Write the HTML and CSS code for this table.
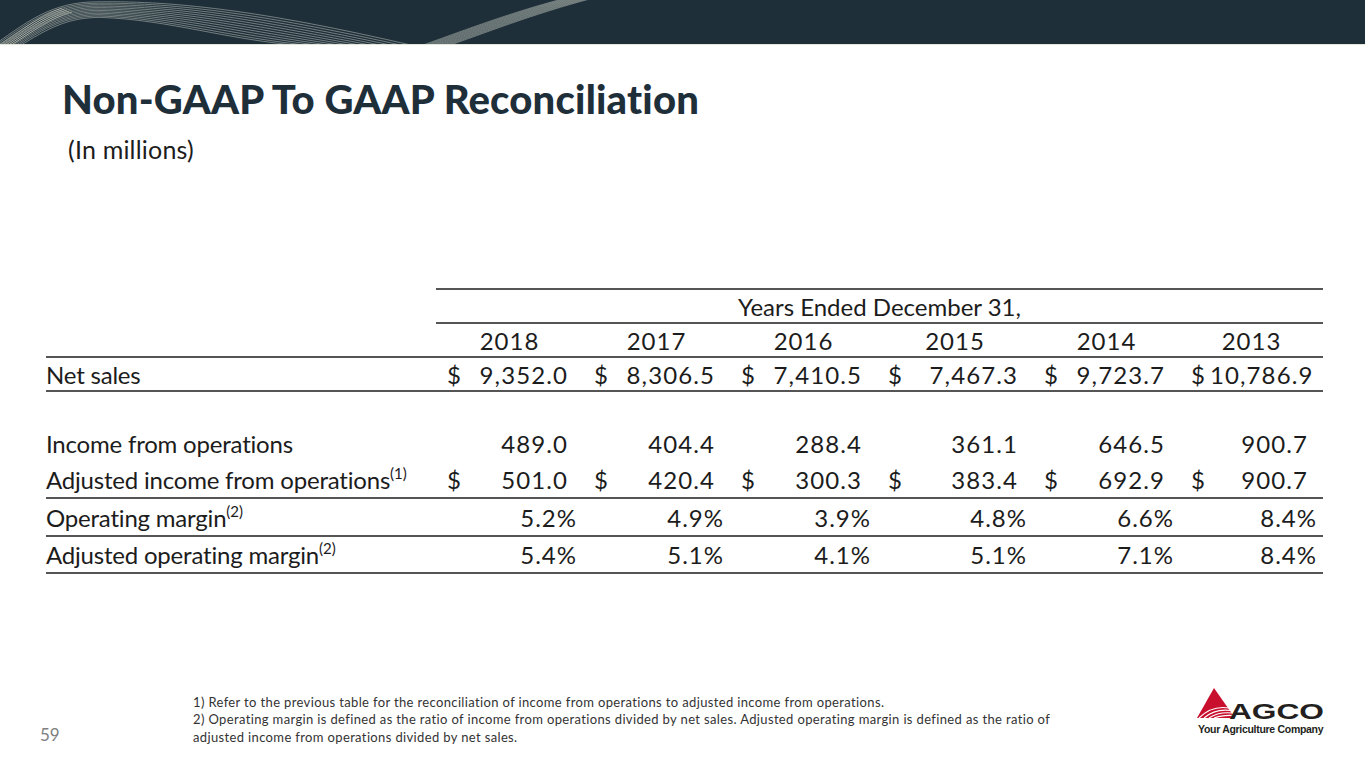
FILE: index.html
```html
<!DOCTYPE html>
<html lang="en">
<head>
<meta charset="utf-8">
<title>Non-GAAP To GAAP Reconciliation</title>
<link rel="stylesheet" href="styles.css">
</head>
<body>
<div class="slide">
  <header class="topbar">
    <svg class="waves" width="700" height="44" viewBox="0 0 700 44" aria-hidden="true">
      <g class="w-main">
        <path d="M -8,46 C 20,28 45,4 90,2 C 170,0 260,10 415,46"/>
        <path d="M -5.5,46 C 22.5,28 47,5.2 91,3.4 C 170,1.8 257,12.8 405,46"/>
        <path d="M -3,46 C 25,28 49,6.4 92,4.8 C 170,3.6 254,15.6 395,46"/>
        <path d="M -0.5,46 C 27.5,28 51,7.6 93,6.2 C 170,5.4 251,18.4 385,46"/>
        <path d="M 2,46 C 30,28 53,8.8 94,7.6 C 170,7.2 248,21.2 375,46"/>
        <path d="M 4.5,46 C 32.5,28 55,10 95,9 C 170,9 245,24 365,46"/>
        <path d="M 7,46 C 35,28 57,11.2 96,10.4 C 170,10.8 242,26.8 355,46"/>
        <path d="M 9.5,46 C 37.5,28 59,12.4 97,11.8 C 170,12.6 239,29.6 345,46"/>
        <path d="M 12,46 C 40,28 61,13.6 98,13.2 C 170,14.4 236,32.4 335,46"/>
        <path d="M 14.5,46 C 42.5,28 63,14.8 99,14.6 C 170,16.2 233,35.2 325,46"/>
        <path d="M 17,46 C 45,28 65,16 100,16 C 170,18 230,38 315,46"/>
        <path d="M 19.5,46 C 47.5,29 67,17.2 101,17.4 C 170,19.8 227,40 305,46"/>
      </g>
      <g class="w-hi">
        <path d="M -2,46 C 20,32 38,16 62,8"/>
        <path d="M 1,46 C 23,32 41,16.5 64.5,9"/>
        <path d="M 4,46 C 26,32 44,17 67,10"/>
        <path d="M 7,46 C 29,32 47,17.5 69.5,11"/>
        <path d="M 10,46 C 32,32 50,18 72,12"/>
      </g>
      <g class="w-soft">
        <path d="M 420,46 C 455,34 505,14 566,-2"/>
        <path d="M 422.5,46 C 457.5,34 507.5,14 568.5,-2"/>
        <path d="M 425,46 C 460,34 510,14 571,-2"/>
        <path d="M 427.5,46 C 462.5,34 512.5,14 573.5,-2"/>
        <path d="M 430,46 C 465,34 515,14 576,-2"/>
        <path d="M 432.5,46 C 467.5,34 517.5,14 578.5,-2"/>
        <path d="M 435,46 C 470,34 520,14 581,-2"/>
        <path d="M 437.5,46 C 472.5,34 522.5,14 583.5,-2"/>
        <path d="M 440,46 C 475,34 525,14 586,-2"/>
        <path d="M 442.5,46 C 477.5,34 527.5,14 588.5,-2"/>
        <path d="M 445,46 C 480,34 530,14 591,-2"/>
        <path d="M 447.5,46 C 482.5,34 532.5,14 593.5,-2"/>
      </g>
    </svg>
  </header>

  <h1 class="title">Non-GAAP To GAAP Reconciliation</h1>
  <div class="subtitle">(In millions)</div>

  <table class="recon">
    <colgroup>
      <col class="c-label">
      <col class="c-cur"><col class="c-g1">
      <col class="c-cur"><col class="c-g2">
      <col class="c-cur"><col class="c-g3">
      <col class="c-cur"><col class="c-g4">
      <col class="c-cur"><col class="c-g5">
      <col class="c-cur"><col class="c-g6">
    </colgroup>
    <tbody>
      <tr class="r-head1">
        <td class="blank"></td>
        <td colspan="12" class="center lined-top lined-bottom">Years Ended December 31,</td>
      </tr>
      <tr class="r-head2">
        <td class="lined-bottom"></td>
        <td colspan="2" class="center year lined-bottom">2018</td>
        <td colspan="2" class="center year lined-bottom">2017</td>
        <td colspan="2" class="center year lined-bottom">2016</td>
        <td colspan="2" class="center year lined-bottom">2015</td>
        <td colspan="2" class="center year lined-bottom">2014</td>
        <td colspan="2" class="center year lined-bottom">2013</td>
      </tr>
      <tr class="r-sales lined">
        <td class="label">Net sales</td>
        <td class="cur">$</td><td class="num">9,352.0</td>
        <td class="cur">$</td><td class="num">8,306.5</td>
        <td class="cur">$</td><td class="num">7,410.5</td>
        <td class="cur">$</td><td class="num">7,467.3</td>
        <td class="cur">$</td><td class="num">9,723.7</td>
        <td class="cur">$</td><td class="num">10,786.9</td>
      </tr>
      <tr class="r-spacer"><td colspan="13"></td></tr>
      <tr class="r-inc">
        <td class="label">Income from operations</td>
        <td class="cur"></td><td class="num">489.0</td>
        <td class="cur"></td><td class="num">404.4</td>
        <td class="cur"></td><td class="num">288.4</td>
        <td class="cur"></td><td class="num">361.1</td>
        <td class="cur"></td><td class="num">646.5</td>
        <td class="cur"></td><td class="num">900.7</td>
      </tr>
      <tr class="r-adj lined">
        <td class="label">Adjusted income from operations<sup>(1)</sup></td>
        <td class="cur">$</td><td class="num">501.0</td>
        <td class="cur">$</td><td class="num">420.4</td>
        <td class="cur">$</td><td class="num">300.3</td>
        <td class="cur">$</td><td class="num">383.4</td>
        <td class="cur">$</td><td class="num">692.9</td>
        <td class="cur">$</td><td class="num">900.7</td>
      </tr>
      <tr class="r-om lined">
        <td class="label">Operating margin<sup>(2)</sup></td>
        <td colspan="2" class="pct">5.2%</td>
        <td colspan="2" class="pct">4.9%</td>
        <td colspan="2" class="pct">3.9%</td>
        <td colspan="2" class="pct">4.8%</td>
        <td colspan="2" class="pct">6.6%</td>
        <td colspan="2" class="pct">8.4%</td>
      </tr>
      <tr class="r-aom lined">
        <td class="label">Adjusted operating margin<sup>(2)</sup></td>
        <td colspan="2" class="pct">5.4%</td>
        <td colspan="2" class="pct">5.1%</td>
        <td colspan="2" class="pct">4.1%</td>
        <td colspan="2" class="pct">5.1%</td>
        <td colspan="2" class="pct">7.1%</td>
        <td colspan="2" class="pct">8.4%</td>
      </tr>
    </tbody>
  </table>

  <footer class="foot">
    <div class="page-num">59</div>
    <div class="notes">
      <p>1) Refer to the previous table for the reconciliation of income from operations to adjusted income from operations.</p>
      <p>2) Operating margin is defined as the ratio of income from operations divided by net sales. Adjusted operating margin is defined as the ratio of adjusted income from operations divided by net sales.</p>
    </div>
    <div class="logo">
      <svg class="logo-mark" width="132" height="38" viewBox="0 0 132 38" role="img" aria-label="AGCO">
        <polygon points="2,31 19,1 40,31" fill="#c8102e"/>
        <g fill="none" stroke="#ffffff" stroke-width="1.1">
          <path d="M 4,31 C 12,23 22,19 34,21"/>
          <path d="M 9,31 C 16,25 24,22 35.5,23.5"/>
          <path d="M 14,31 C 20,27 27,25 37,26"/>
          <path d="M 19,31 C 24,29 30,28 38.5,28.5"/>
        </g>
        <text class="logo-word" x="34" y="32" textLength="95" lengthAdjust="spacingAndGlyphs">AGCO</text>
      </svg>
      <div class="logo-tag">Your Agriculture Company</div>
    </div>
  </footer>
</div>
</body>
</html>
```

FILE: styles.css
```css
* { box-sizing: border-box; }

html, body {
  margin: 0;
  padding: 0;
  background: #ffffff;
}

body {
  font-family: "Lato", "Noto Sans", sans-serif;
  color: #1c1c1c;
}

.slide {
  width: 1365px;
  height: 768px;
  display: flex;
  flex-direction: column;
  overflow: hidden;
}

.topbar {
  height: 45px;
  flex: 0 0 45px;
  background: #1f2f3a;
  border-bottom: 1px solid #e3e6da;
  overflow: hidden;
}

.waves { display: block; }
.waves path { fill: none; }
.w-main { stroke: #bcc2b8; stroke-width: 0.6; opacity: 0.9; }
.w-hi { stroke: #e6e4d0; stroke-width: 0.6; opacity: 0.85; }
.w-soft { stroke: #b6bcb2; stroke-width: 0.6; opacity: 0.85; }

.title {
  margin: 34px 0 0 62px;
  font-size: 40px;
  line-height: 40px;
  font-weight: 900;
  color: #1f2f3a;
  letter-spacing: 0.2px;
}

.subtitle {
  margin: 15px 0 0 68px;
  font-size: 25px;
  line-height: 30px;
  color: #1c1c1c;
  letter-spacing: 0.2px;
}

.recon {
  margin: 124px 0 0 46px;
  width: 1277px;
  border-collapse: collapse;
  table-layout: fixed;
  font-size: 24px;
  color: #1c1c1c;
}

.c-label { width: 390px; }
.c-cur { width: 30px; }
.c-g1, .c-g2, .c-g3, .c-g5 { width: 117px; }
.c-g4 { width: 126px; }
.c-g6 { width: 113px; }

.recon td {
  padding: 0;
  white-space: nowrap;
  vertical-align: middle;
}

.r-head1 td, .r-head2 td { height: 34px; }
.r-sales td { height: 34px; }
.r-spacer td { height: 34px; }
.r-inc td { height: 36px; }
.r-adj td { height: 37px; }
.r-om td { height: 38px; }
.r-aom td { height: 37px; }

.lined-top { border-top: 2px solid #555555; }
.lined-bottom { border-bottom: 2px solid #555555; }
.lined td { border-bottom: 2px solid #555555; }

.center { text-align: center; }

.year { letter-spacing: 1px; }

.label {
  text-align: left;
  letter-spacing: -0.2px;
}

.cur {
  text-align: left;
  padding-left: 11px !important;
}

.num {
  text-align: right;
  padding-right: 15px !important;
  letter-spacing: 1.1px;
}

.pct {
  text-align: right;
  padding-right: 6px !important;
  letter-spacing: 1px;
}

sup {
  font-size: 15px;
  line-height: 0;
  vertical-align: 10px;
  letter-spacing: 0;
}

.foot {
  margin-top: auto;
  margin-bottom: 22px;
  display: flex;
  align-items: flex-end;
  padding: 0 38px 0 40px;
}

.page-num {
  width: 153px;
  font-size: 17px;
  color: #808080;
  line-height: 1;
  margin-bottom: 3px;
}

.notes {
  width: 880px;
  font-size: 13px;
  line-height: 17.5px;
  letter-spacing: 0.36px;
  color: #333333;
}

.notes p { margin: 0; }

.logo {
  margin-left: auto;
  margin-bottom: 11px;
  display: flex;
  flex-direction: column;
  align-items: flex-start;
}

.logo-mark { display: block; }

.logo-word {
  font-family: "Liberation Sans", Arial, sans-serif;
  font-weight: 700;
  font-size: 22px;
  fill: #231f20;
}

.logo-tag {
  margin: -2px 0 0 3px;
  font-family: "Liberation Sans", Arial, sans-serif;
  font-weight: 700;
  font-size: 10.5px;
  line-height: 12px;
  letter-spacing: -0.3px;
  white-space: nowrap;
  color: #231f20;
}
```
